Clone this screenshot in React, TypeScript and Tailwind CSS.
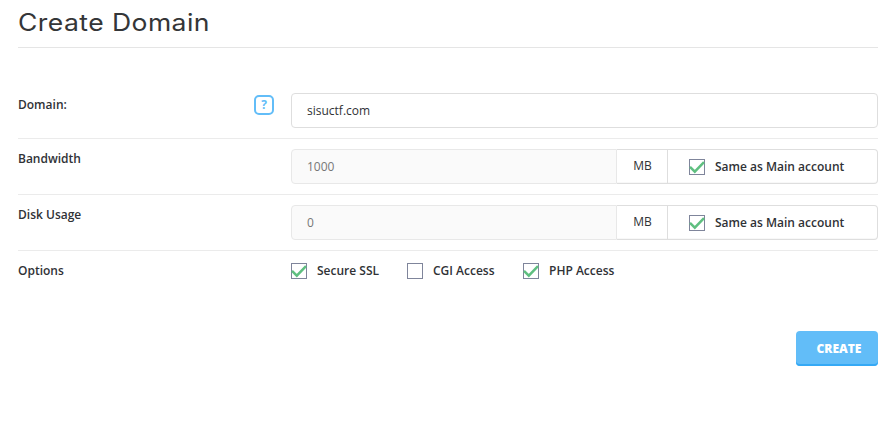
import React from "react";

function CheckBox({ checked }: { checked?: boolean }) {
  return (
    <span className="block h-4 w-4 shrink-0 border border-[#7f859b] bg-white">
      {checked && (
        <svg viewBox="0 0 14 14" className="block h-[14px] w-[14px] overflow-visible">
          <path d="M0 6.8 L4.8 11.6 L14 2.1" fill="none" stroke="#5fbf80" strokeWidth="2.5" />
        </svg>
      )}
    </span>
  );
}

function Option({ label, checked }: { label: string; checked?: boolean }) {
  return (
    <label className="flex items-center gap-2.5 font-semibold">
      <CheckBox checked={checked} />
      <span className="whitespace-nowrap">{label}</span>
    </label>
  );
}

function Row({ label, help, last, children }: { label: string; help?: boolean; last?: boolean; children: React.ReactNode }) {
  return (
    <div className={`flex h-14 pt-2.5 ${last ? "" : "border-b border-[#ebebeb]"}`}>
      <div className="flex w-[273px] shrink-0 items-start justify-between pr-[17px]">
        <span className={`font-semibold leading-5 ${help ? "mt-[2px]" : ""}`}>{label}</span>
        {help && (
          <span className="mt-[2px] flex h-5 w-5 items-center justify-center rounded-[5px] border-2 border-[#62bdf8] pb-px text-[12px] font-bold leading-none text-[#62bdf8]">
            ?
          </span>
        )}
      </div>
      <div className="min-w-0 flex-1">{children}</div>
    </div>
  );
}

function Quota({ value }: { value: string }) {
  return (
    <div className="flex h-[35px]">
      <div className="flex w-[326px] items-center rounded-l border border-[#e8e8e8] bg-[#fafafa] pl-[15px] text-[#777]">{value}</div>
      <div className="flex w-[51px] items-center justify-center border-y border-r border-[#dedede] pb-[2px] pl-px shadow-[inset_0_-1px_0_#f8f8f8]">MB</div>
      <div className="flex flex-1 items-center rounded-r border-y border-r border-[#dedede] pl-[21px] shadow-[inset_0_-1px_0_#f8f8f8]">
        <Option label="Same as Main account" checked />
      </div>
    </div>
  );
}

export default function App() {
  return (
    <main className="h-[426px] bg-white pr-3 pl-[18px] font-['Open_Sans',sans-serif] text-[12px] text-[#303236]">
      <h1 className="h-12 border-b border-[#e5e5e5] pt-[6px] font-['Inter',sans-serif] text-[24px] leading-[34px] tracking-[0.4px] text-[#343638]">
        <span className="inline-block origin-left scale-x-[1.105]">Create Domain</span>
      </h1>
      <form className="pt-[35px]">
        <Row label="Domain:" help>
          <div className="flex h-[35px] items-center rounded border border-[#dedede] pl-[15px]">sisuctf.com</div>
        </Row>
        <Row label="Bandwidth">
          <Quota value="1000" />
        </Row>
        <Row label="Disk Usage">
          <Quota value="0" />
        </Row>
        <Row label="Options" last>
          <div className="flex h-5 items-center">
            <div className="w-[116px]"><Option label="Secure SSL" checked /></div>
            <div className="w-[116px]"><Option label="CGI Access" /></div>
            <Option label="PHP Access" checked />
          </div>
        </Row>
        <div className="flex justify-end pt-6">
          <button type="button" className="h-[35px] w-[82px] rounded bg-[#62bdf8] pl-1 font-extrabold text-white shadow-[inset_0_-2px_0_#35a9f5]">CREATE</button>
        </div>
      </form>
    </main>
  );
}
